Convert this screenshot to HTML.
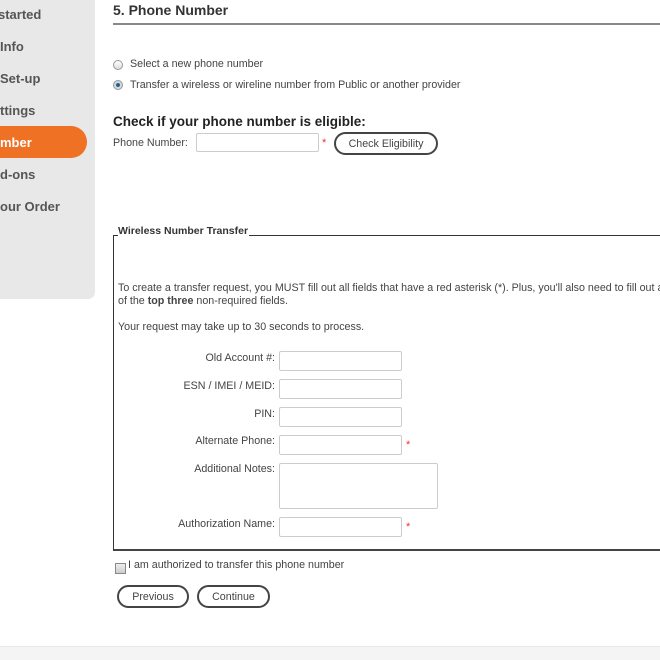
<!DOCTYPE html>
<html><head><style>
*{margin:0;padding:0;box-sizing:border-box}
body{width:660px;height:660px;overflow:hidden;background:#fff;font-family:"Liberation Sans",Arial,sans-serif;color:#444;position:relative}
.a{position:absolute;white-space:nowrap}
#side{position:absolute;left:-10px;top:-10px;width:105px;height:309px;background:#e8e8e8;border-radius:0 0 7px 0}
.nav{position:absolute;left:0;font-size:13px;font-weight:bold;color:#555}
#pill{position:absolute;left:-30px;top:126px;width:117px;height:32px;background:#ee7124;border-radius:16px}
.s{font-size:10.7px;color:#444}
.in{position:absolute;width:123px;height:20px;border:1px solid #ccc;border-radius:2px;background:#fff}
.lab{position:absolute;width:160px;left:115px;text-align:right;font-size:10.7px;color:#444}
.st{position:absolute;color:#e33;font-size:11px}
.btn{position:absolute;height:23px;border:2px solid #444;border-radius:12px;font-size:10.7px;color:#444;text-align:center;line-height:20px;background:#fff}
.rad{position:absolute;width:10px;height:10px;border-radius:50%;border:1px solid #999;background:linear-gradient(#fff,#ddd)}
</style></head><body>
<div id="side"></div>
<div id="pill"></div>
<div class="nav" style="top:7px;left:-2px">started</div>
<div class="nav" style="top:39px">Info</div>
<div class="nav" style="top:71px">Set-up</div>
<div class="nav" style="top:103px">ttings</div>
<div class="nav" style="top:135px;color:#fff">mber</div>
<div class="nav" style="top:167px">d-ons</div>
<div class="nav" style="top:199px">our Order</div>

<div class="a" style="left:113px;top:2px;font-size:14px;font-weight:bold;color:#333">5. Phone Number</div>
<div class="a" style="left:113px;top:23px;width:547px;height:2px;background:#888"></div>

<div class="rad" style="left:113px;top:60px"></div>
<div class="a s" style="left:130px;top:58px">Select a new phone number</div>
<div class="rad" style="left:113px;top:80px;background:radial-gradient(#1a5f8a 30%,#cfd8e0 40%)"></div>
<div class="a s" style="left:130px;top:79px">Transfer a wireless or wireline number from Public or another provider</div>

<div class="a" style="left:113px;top:114px;font-size:13.5px;font-weight:bold;color:#222">Check if your phone number is eligible:</div>
<div class="a s" style="left:113px;top:137px">Phone Number:</div>
<div class="in" style="left:196px;top:133px;width:123px;height:19px"></div>
<div class="st" style="left:322px;top:137px">*</div>
<div class="btn" style="left:334px;top:132px;width:104px">Check Eligibility</div>

<div class="a" style="left:113px;top:236px;width:600px;height:315px;border:1px solid #333;border-top:none;border-bottom:2px solid #444"></div>
<div class="a" style="left:249px;top:235px;width:420px;height:1px;background:#333"></div>
<div class="a" style="left:113px;top:235px;width:5px;height:1px;background:#333"></div>
<div class="a" style="left:118px;top:225px;font-size:10.5px;font-weight:bold;color:#333">Wireless Number Transfer</div>

<div class="a s" style="left:118px;top:282px">To create a transfer request, you MUST fill out all fields that have a red asterisk (*). Plus, you'll also need to fill out at</div>
<div class="a s" style="left:118px;top:295px">of the <b>top three</b> non-required fields.</div>
<div class="a s" style="left:118px;top:321px">Your request may take up to 30 seconds to process.</div>

<div class="lab" style="top:352px">Old Account #:</div><div class="in" style="left:279px;top:351px"></div>
<div class="lab" style="top:380px">ESN / IMEI / MEID:</div><div class="in" style="left:279px;top:379px"></div>
<div class="lab" style="top:408px">PIN:</div><div class="in" style="left:279px;top:407px"></div>
<div class="lab" style="top:435px">Alternate Phone:</div><div class="in" style="left:279px;top:435px"></div><div class="st" style="left:406px;top:439px">*</div>
<div class="lab" style="top:463px">Additional Notes:</div><div class="in" style="left:279px;top:463px;width:159px;height:46px"></div>
<div class="lab" style="top:518px">Authorization Name:</div><div class="in" style="left:279px;top:517px"></div><div class="st" style="left:406px;top:521px">*</div>

<div class="a" style="left:115px;top:563px;width:11px;height:11px;border:1px solid #888;background:linear-gradient(#eee,#ccc)"></div>
<div class="a s" style="left:128px;top:559px">I am authorized to transfer this phone number</div>
<div class="btn" style="left:117px;top:585px;width:72px">Previous</div>
<div class="btn" style="left:197px;top:585px;width:73px">Continue</div>

<div class="a" style="left:0;top:646px;width:660px;height:14px;background:#f4f4f4;border-top:1px solid #e8e8e8"></div>
</body></html>
